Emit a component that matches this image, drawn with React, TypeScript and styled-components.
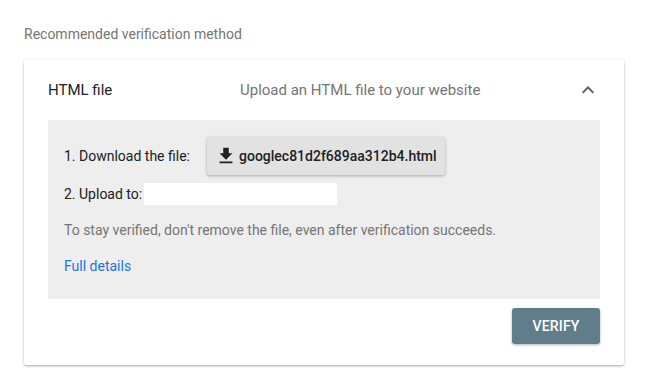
import React from "react";
import styled, { createGlobalStyle } from "styled-components";

const Global = createGlobalStyle`
  html, body { margin: 0; padding: 0; background: #ffffff; }
  body { font-family: Roboto, "Liberation Sans", Arial, sans-serif; -webkit-font-smoothing: antialiased; }
  * { box-sizing: border-box; }
`;

const Page = styled.div`
  width: 648px;
  height: 380px;
  padding: 24px 24px 0;
  display: flex;
  flex-direction: column;
`;

const Heading = styled.div`
  font-size: 14px;
  line-height: 20px;
  color: #757575;
  margin-bottom: 16px;
`;

const Card = styled.div`
  width: 600px;
  background: #fff;
  border-radius: 2px;
  box-shadow: 0 1px 3px rgba(0, 0, 0, 0.28), 0 1px 1px rgba(0, 0, 0, 0.08);
  display: flex;
  flex-direction: column;
`;

const Header = styled.div`
  height: 60px;
  padding: 0 24px;
  display: grid;
  grid-template-columns: 192px 1fr 24px;
  align-items: center;
`;

const MethodName = styled.div`
  font-size: 15px;
  color: #212121;
`;

const MethodDesc = styled.div`
  font-size: 15px;
  color: #757575;
`;

const IconSlot = styled.div`
  width: 24px;
  height: 24px;
  display: flex;
  color: #616161;
`;

const Panel = styled.div`
  margin: 0 24px;
  background: #eeeeee;
  padding: 16px 16px 23px;
  display: flex;
  flex-direction: column;
`;

const Row = styled.div<{ $h: number; $mt?: number }>`
  height: ${(p) => p.$h}px;
  margin-top: ${(p) => p.$mt ?? 0}px;
  display: flex;
  align-items: center;
  font-size: 14px;
  color: #212121;
`;

const DownloadButton = styled.button`
  margin-left: 17px;
  height: 38px;
  margin-top: 1px;
  margin-bottom: 1px;
  padding: 0 8px 0 8px;
  display: flex;
  align-items: center;
  gap: 2px;
  border: none;
  border-radius: 3px;
  background: #e2e2e2;
  box-shadow: 0 1px 3px rgba(0, 0, 0, 0.3);
  font-family: inherit;
  font-size: 14px;
  font-weight: 500;
  color: #212121;
  cursor: pointer;
`;

const PathBox = styled.div`
  width: 193px;
  height: 22px;
  margin-left: 2px;
  background: #fff;
`;

const Note = styled.div`
  margin-top: 14px;
  font-size: 14px;
  line-height: 20px;
  color: #757575;
`;

const DetailsLink = styled.a`
  margin-top: 16px;
  font-size: 14px;
  line-height: 20px;
  color: #1a73e8;
  text-decoration: none;
  align-self: flex-start;
`;

const Footer = styled.div`
  padding: 9px 24px 21px;
  display: flex;
  justify-content: flex-end;
`;

const VerifyButton = styled.button`
  width: 88px;
  height: 36px;
  border: none;
  border-radius: 3px;
  background: #607d8b;
  color: #fff;
  font-family: inherit;
  font-size: 14px;
  font-weight: 500;
  letter-spacing: 0.2px;
  box-shadow: 0 1px 3px rgba(0, 0, 0, 0.3);
  cursor: pointer;
`;

const ExpandLess = () => (
  <svg width="24" height="24" viewBox="0 0 24 24" fill="currentColor">
    <path d="M12 8l-6 6 1.41 1.41L12 10.83l4.59 4.58L18 14z" />
  </svg>
);

const DownloadIcon = () => (
  <svg width="22" height="22" viewBox="0 0 24 24" fill="#212121">
    <path d="M19 9h-4V3H9v6H5l7 7 7-7zM5 18v2h14v-2H5z" />
  </svg>
);

export default function App() {
  return (
    <>
      <Global />
      <Page>
        <Heading>Recommended verification method</Heading>
        <Card>
          <Header>
            <MethodName>HTML file</MethodName>
            <MethodDesc>Upload an HTML file to your website</MethodDesc>
            <IconSlot>
              <ExpandLess />
            </IconSlot>
          </Header>
          <Panel>
            <Row $h={40}>
              1. Download the file:
              <DownloadButton>
                <DownloadIcon />
                googlec81d2f689aa312b4.html
              </DownloadButton>
            </Row>
            <Row $h={24} $mt={6}>
              2. Upload to:
              <PathBox />
            </Row>
            <Note>To stay verified, don't remove the file, even after verification succeeds.</Note>
            <DetailsLink href="#">Full details</DetailsLink>
          </Panel>
          <Footer>
            <VerifyButton>VERIFY</VerifyButton>
          </Footer>
        </Card>
      </Page>
    </>
  );
}
